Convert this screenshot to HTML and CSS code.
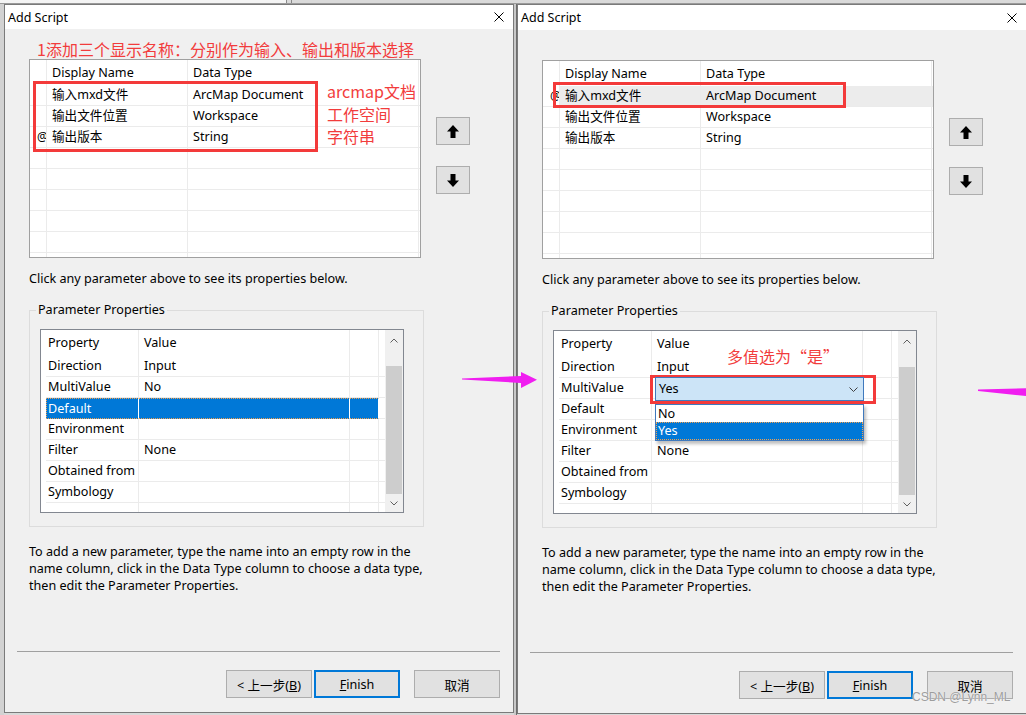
FILE: index.html
```html
<!DOCTYPE html>
<html lang="zh-CN">
<head>
<meta charset="utf-8">
<title>Add Script</title>
<link rel="stylesheet" href="styles.css">
</head>
<body>
<div class="topstrip"><span class="ts-light"></span><span class="ts-line"></span><span class="ts-line2"></span></div>
<div class="desk">
  <div class="edge"></div>

  <section class="dlg left">
    <header class="title"><span>Add Script</span>
      <svg class="close" width="10" height="10" viewBox="0 0 10 10"><path d="M0.5 0.5L9.5 9.5M9.5 0.5L0.5 9.5" stroke="#000" stroke-width="1"/></svg>
    </header>
    <div class="body">
      <div class="note">1添加三个显示名称：分别作为输入、输出和版本选择</div>
      <div class="upper">
        <div class="ptable">
          <div class="prow head"><div></div><div>Display Name</div><div>Data Type</div><div></div></div>
          <div class="prow"><div></div><div>输入mxd文件</div><div>ArcMap Document</div><div></div></div>
          <div class="prow"><div></div><div>输出文件位置</div><div>Workspace</div><div></div></div>
          <div class="prow"><div class="rh">@</div><div>输出版本</div><div>String</div><div></div></div>
          <div class="prow"><div></div><div></div><div></div><div></div></div>
          <div class="prow"><div></div><div></div><div></div><div></div></div>
          <div class="prow"><div></div><div></div><div></div><div></div></div>
          <div class="prow"><div></div><div></div><div></div><div></div></div>
          <div class="prow"><div></div><div></div><div></div><div></div></div>
          <div class="prow"><div></div><div></div><div></div><div></div></div>
        </div>
        <div class="movers">
          <button class="mv"><svg width="12" height="13" viewBox="0 0 12 13"><path d="M6 0L12 6.5H8.5V13H3.5V6.5H0Z" fill="#000"/></svg></button>
          <button class="mv"><svg width="12" height="13" viewBox="0 0 12 13"><path d="M6 13L12 6.5H8.5V0H3.5V6.5H0Z" fill="#000"/></svg></button>
        </div>
      </div>
      <p class="hint">Click any parameter above to see its properties below.</p>
      <fieldset class="group">
        <legend>Parameter Properties</legend>
        <div class="pgrid">
          <div class="pg-table">
            <div class="grow head"><div></div><div>Property</div><div>Value</div><div></div><div></div></div>
            <div class="grow"><div></div><div>Direction</div><div>Input</div><div></div><div></div></div>
            <div class="grow"><div></div><div>MultiValue</div><div>No</div><div></div><div></div></div>
            <div class="grow sel"><div></div><div>Default</div><div></div><div></div><div></div></div>
            <div class="grow"><div></div><div>Environment</div><div></div><div></div><div></div></div>
            <div class="grow"><div></div><div>Filter</div><div>None</div><div></div><div></div></div>
            <div class="grow"><div></div><div>Obtained from</div><div></div><div></div><div></div></div>
            <div class="grow"><div></div><div>Symbology</div><div></div><div></div><div></div></div>
            <div class="grow"><div></div><div></div><div></div><div></div><div></div></div>
          </div>
          <div class="scroll">
            <div class="sb-up"><svg width="8" height="5" viewBox="0 0 8 5"><path d="M0.5 4.5L4 1L7.5 4.5" fill="none" stroke="#606060"/></svg></div>
            <div class="thumb"></div>
            <div class="sb-space"></div>
            <div class="sb-down"><svg width="8" height="5" viewBox="0 0 8 5"><path d="M0.5 0.5L4 4L7.5 0.5" fill="none" stroke="#606060"/></svg></div>
          </div>
        </div>
      </fieldset>
      <p class="help">To add a new parameter, type the name into an empty row in the<br>name column, click in the Data Type column to choose a data type,<br>then edit the Parameter Properties.</p>
    </div>
    <footer class="footer">
      <div class="sep"></div>
      <div class="btns">
        <button class="btn">&lt; 上一步(<u>B</u>)</button>
        <button class="btn finish"><u>F</u>inish</button>
        <button class="btn cancel">取消</button>
      </div>
    </footer>
    <div class="redbox rb-l1"></div>
    <div class="anno anno-l">arcmap文档<br>工作空间<br>字符串</div>
  </section>

  <div class="gap"></div>

  <section class="dlg right">
    <header class="title"><span>Add Script</span>
      <svg class="close" width="10" height="10" viewBox="0 0 10 10"><path d="M0.5 0.5L9.5 9.5M9.5 0.5L0.5 9.5" stroke="#000" stroke-width="1"/></svg>
    </header>
    <div class="body">
      <div class="note"></div>
      <div class="upper">
        <div class="ptable">
          <div class="prow head"><div></div><div>Display Name</div><div>Data Type</div><div></div></div>
          <div class="prow cur"><div class="rh">@</div><div>输入mxd文件</div><div>ArcMap Document</div><div></div></div>
          <div class="prow"><div></div><div>输出文件位置</div><div>Workspace</div><div></div></div>
          <div class="prow"><div></div><div>输出版本</div><div>String</div><div></div></div>
          <div class="prow"><div></div><div></div><div></div><div></div></div>
          <div class="prow"><div></div><div></div><div></div><div></div></div>
          <div class="prow"><div></div><div></div><div></div><div></div></div>
          <div class="prow"><div></div><div></div><div></div><div></div></div>
          <div class="prow"><div></div><div></div><div></div><div></div></div>
          <div class="prow"><div></div><div></div><div></div><div></div></div>
        </div>
        <div class="movers">
          <button class="mv"><svg width="12" height="13" viewBox="0 0 12 13"><path d="M6 0L12 6.5H8.5V13H3.5V6.5H0Z" fill="#000"/></svg></button>
          <button class="mv"><svg width="12" height="13" viewBox="0 0 12 13"><path d="M6 13L12 6.5H8.5V0H3.5V6.5H0Z" fill="#000"/></svg></button>
        </div>
      </div>
      <p class="hint">Click any parameter above to see its properties below.</p>
      <fieldset class="group">
        <legend>Parameter Properties</legend>
        <div class="pgrid">
          <div class="pg-table">
            <div class="grow head"><div></div><div>Property</div><div>Value</div><div></div><div></div></div>
            <div class="grow"><div></div><div>Direction</div><div>Input</div><div></div><div></div></div>
            <div class="grow"><div></div><div>MultiValue</div><div class="editcell">
              <div class="combo"><span>Yes</span><svg width="9" height="5" viewBox="0 0 9 5"><path d="M0.5 0.5L4.5 4.5L8.5 0.5" fill="none" stroke="#404040"/></svg></div>
              <div class="droplist"><div class="opt">No</div><div class="opt on">Yes</div></div>
            </div><div></div><div></div></div>
            <div class="grow"><div></div><div>Default</div><div></div><div></div><div></div></div>
            <div class="grow"><div></div><div>Environment</div><div></div><div></div><div></div></div>
            <div class="grow"><div></div><div>Filter</div><div>None</div><div></div><div></div></div>
            <div class="grow"><div></div><div>Obtained from</div><div></div><div></div><div></div></div>
            <div class="grow"><div></div><div>Symbology</div><div></div><div></div><div></div></div>
            <div class="grow"><div></div><div></div><div></div><div></div><div></div></div>
          </div>
          <div class="scroll">
            <div class="sb-up"><svg width="8" height="5" viewBox="0 0 8 5"><path d="M0.5 4.5L4 1L7.5 4.5" fill="none" stroke="#606060"/></svg></div>
            <div class="thumb"></div>
            <div class="sb-space"></div>
            <div class="sb-down"><svg width="8" height="5" viewBox="0 0 8 5"><path d="M0.5 0.5L4 4L7.5 0.5" fill="none" stroke="#606060"/></svg></div>
          </div>
        </div>
      </fieldset>
      <p class="help">To add a new parameter, type the name into an empty row in the<br>name column, click in the Data Type column to choose a data type,<br>then edit the Parameter Properties.</p>
    </div>
    <footer class="footer">
      <div class="sep"></div>
      <div class="btns">
        <button class="btn">&lt; 上一步(<u>B</u>)</button>
        <button class="btn finish"><u>F</u>inish</button>
        <button class="btn cancel">取消</button>
      </div>
    </footer>
    <div class="redbox rb-r1"></div>
    <div class="redbox rb-r2"></div>
    <div class="anno anno-r">多值选为“是”</div>
  </section>
</div>

<svg class="arrows" width="1026" height="715" viewBox="0 0 1026 715">
  <polygon points="462,378.6 521,376 521,372 537,379.8 521,388 521,383 462,379.6" fill="#f01ef0"/>
  <polygon points="978,389.6 1026,388.3 1026,396 978,391" fill="#f01ef0"/>
</svg>
<div class="watermark">CSDN @Lynn_ML</div>
</body>
</html>
```

FILE: styles.css
```css
* { box-sizing: border-box; }
html, body { margin: 0; padding: 0; }
body {
  width: 1026px;
  height: 715px;
  overflow: hidden;
  position: relative;
  background: #d9d9d9;
  font-family: "Noto Sans", "Noto Sans CJK SC", sans-serif;
  font-size: 12.6px;
  color: #000;
}

.topstrip {
  height: 4px;
  background: #dadada;
  display: flex;
  border-bottom: 1px solid #9a9a9a;
}
.ts-light { width: 286px; background: #f4f4f4; }
.ts-line { width: 1px; background: #8a8a8a; }
.ts-line2 { width: 1px; margin-left: 4px; background: #8a8a8a; }

.desk {
  display: flex;
  align-items: flex-start;
}
.edge {
  width: 4px;
  height: 711px;
  background: #d2d2d2;
  flex: none;
}
.gap {
  width: 3px;
  height: 711px;
  flex: none;
  background: linear-gradient(to right, #c8c8c8 0 2px, #6d6d6d 2px);
}

.dlg {
  position: relative;
  flex: none;
  width: 510px;
  border: 1px solid #7a7a7a;
  background: #f0f0f0;
  display: flex;
  flex-direction: column;
}
.dlg.left { height: 709px; }
.dlg.right { height: 710px; }

.title {
  height: 24px;
  background: #fff;
  display: flex;
  align-items: center;
  justify-content: space-between;
  padding: 0 9px 0 3px;
  font-size: 12.5px;
}
.right .title { height: 25px; }

.body {
  padding: 10px 0 0 24px;
}

.note {
  height: 20px;
  line-height: 20px;
  padding-left: 8px;
  color: #f23c3c;
  font-family: "Noto Sans CJK SC", sans-serif;
  font-size: 16px;
  white-space: nowrap;
}

.upper { display: flex; align-items: flex-start; }

.ptable {
  width: 392px;
  height: 199px;
  border: 1px solid #a0a0a0;
  background: #fff;
  overflow: hidden;
  flex: none;
}
.prow {
  display: grid;
  grid-template-columns: 17px 141px 231px 1px;
  height: 21px;
}
.prow > div {
  border-right: 1px solid #ebebeb;
  border-bottom: 1px solid #ebebeb;
  padding-left: 5px;
  line-height: 20px;
  white-space: nowrap;
  overflow: hidden;
}
.prow > div:last-child { border-right: none; padding: 0; }
.prow.head { height: 25px; }
.prow.head > div { border-bottom: none; line-height: 25px; }
.prow > .rh { padding-left: 7px; font-size: 12px; }
.prow.cur > div:not(:first-child) { background: #ececec; }

.movers {
  margin-left: 15px;
  padding-top: 58px;
  display: flex;
  flex-direction: column;
  gap: 21px;
}
.mv {
  width: 34px;
  height: 28px;
  background: #e1e1e1;
  border: 1px solid #adadad;
  padding: 0;
  display: flex;
  align-items: center;
  justify-content: center;
}

.hint {
  margin: 12px 0 0;
  line-height: 17px;
  white-space: nowrap;
}

.group {
  margin: 15px 0 0;
  width: 395px;
  padding: 0 0 13px 6px;
  border: 1px solid #dcdcdc;
}
.group legend {
  padding: 0 2px;
  line-height: 16px;
}

.pgrid {
  margin: 11px 0 0 4px;
  width: 364px;
  height: 184px;
  border: 1px solid #828790;
  background: #fff;
  display: flex;
  overflow: hidden;
}
.pg-table { width: 344px; flex: none; overflow: hidden; }
.grow {
  display: grid;
  grid-template-columns: 5px 93px 211px 29px 6px;
  height: 21px;
}
.grow > div {
  border-bottom: 1px solid #ebebeb;
  line-height: 20px;
  white-space: nowrap;
}
.grow > div:nth-child(2) { padding-left: 2px; border-right: 1px solid #ebebeb; }
.grow > div:nth-child(3) { padding-left: 5px; border-right: 1px solid #ebebeb; }
.grow > div:nth-child(4) { border-right: 1px solid #ebebeb; }
.grow > div:first-child { border-bottom: none; }
.grow.head { height: 26px; }
.grow.head > div { border-bottom: none; line-height: 26px; }
.grow.sel > div:nth-child(2),
.grow.sel > div:nth-child(3),
.grow.sel > div:nth-child(4) {
  background: #0078d7;
  color: #fff;
  border-right-color: #fff;
  border-top: 1px dotted #f0a050;
  border-bottom: 1px dotted #f0a050;
  line-height: 19px;
}
.grow.sel > div:nth-child(2) { border-left: 1px dotted #f0a050; padding-left: 1px; }

.scroll {
  width: 18px;
  flex: none;
  background: #f0f0f0;
  display: flex;
  flex-direction: column;
  align-items: center;
}
.sb-up { height: 20px; display: flex; align-items: center; justify-content: center; }
.thumb { width: 16px; height: 128px; margin-top: 16px; background: #cdcdcd; }
.sb-space { flex: 1; }
.sb-down { height: 17px; display: flex; align-items: center; justify-content: center; }

.editcell { position: relative; overflow: visible !important; }
.combo {
  position: absolute;
  left: 3px;
  top: -1px;
  width: 209px;
  height: 24px;
  background: #cce4f7;
  border: 1px solid #3f79bd;
  display: flex;
  align-items: center;
  justify-content: space-between;
  padding: 0 5px 0 3px;
  line-height: 22px;
  z-index: 2;
}
.droplist {
  position: absolute;
  left: 3px;
  top: 26px;
  width: 209px;
  border: 1px solid #3f79bd;
  background: #fff;
  box-shadow: 2px 3px 3px rgba(0, 0, 0, 0.25);
  z-index: 3;
}
.opt { height: 17px; line-height: 17px; padding-left: 2px; }
.opt.on {
  height: 18px;
  background: #0078d7;
  color: #fff;
  outline: 1px dotted #f0a050;
  outline-offset: -1px;
}

.help {
  margin: 16px 0 0;
  line-height: 17px;
  white-space: nowrap;
}

.footer { margin-top: auto; }
.sep { height: 1px; background: #a0a0a0; margin: 0 13px 0 12px; }
.btns {
  display: flex;
  justify-content: flex-end;
  padding: 18px 13px 14px 0;
}
.btn {
  width: 86px;
  height: 28px;
  background: #e1e1e1;
  border: 1px solid #adadad;
  font-family: "Noto Sans", "Noto Sans CJK SC", sans-serif;
  font-size: 12.6px;
  color: #000;
  padding: 0;
}
.btn + .btn { margin-left: 2px; }
.btn.finish { border: 2px solid #0078d7; }
.btn.cancel { margin-left: 14px; }

.redbox {
  position: absolute;
  border: 3px solid #f33a3a;
}
.rb-l1 { left: 28px; top: 76px; width: 285px; height: 71px; }
.rb-r1 { left: 35px; top: 77px; width: 293px; height: 26px; }
.rb-r2 { left: 132px; top: 370px; width: 226px; height: 29px; }

.anno {
  position: absolute;
  color: #f23c3c;
  font-family: "Noto Sans CJK SC", sans-serif;
  font-size: 16px;
  white-space: nowrap;
}
.anno-l { left: 322px; top: 75px; line-height: 22.5px; }
.anno-r { left: 209px; top: 341px; line-height: 20px; }

.arrows {
  position: absolute;
  left: 0;
  top: 0;
  pointer-events: none;
}
.watermark {
  position: absolute;
  left: 912px;
  top: 689px;
  font-family: "Liberation Sans", sans-serif;
  font-size: 12px;
  line-height: 17px;
  color: #9d9d9d;
  text-shadow: 0 0 1px #fff;
}
```
